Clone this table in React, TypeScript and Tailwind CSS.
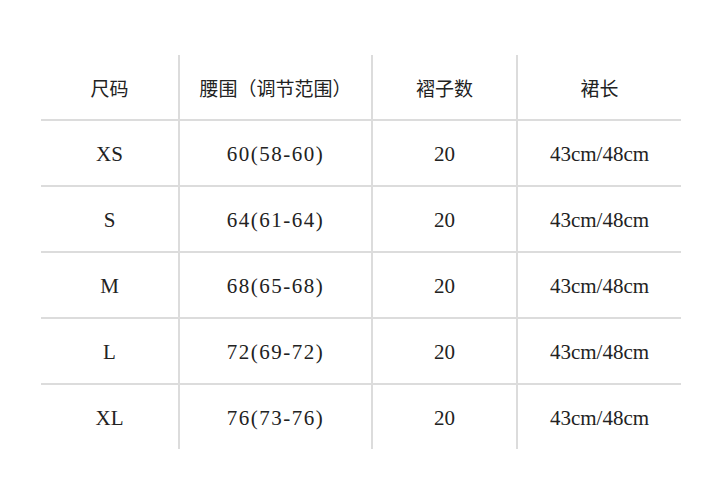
const headers = ["尺码", "腰围（调节范围）", "褶子数", "裙长"]

const rows = [
  ["XS", "60(58-60)", "20", "43cm/48cm"],
  ["S", "64(61-64)", "20", "43cm/48cm"],
  ["M", "68(65-68)", "20", "43cm/48cm"],
  ["L", "72(69-72)", "20", "43cm/48cm"],
  ["XL", "76(73-76)", "20", "43cm/48cm"],
]

const cjk = { fontFamily: '"Noto Sans CJK SC", "Noto Sans", sans-serif' }
const serif = { fontFamily: '"Liberation Serif", "Noto Sans CJK SC", serif' }

export default function App() {
  return (
    <div className="h-[486px] w-[720px] bg-white pl-[41px] pt-[55px] text-[#222222]">
      <div className="grid w-[640px] grid-cols-[137px_193px_145px_165px]">
        {headers.map((h, i) => (
          <div
            key={h}
            className={`flex h-[64px] items-center justify-center pt-[2px] text-[19px] ${i > 0 ? "border-l-2 border-[#dcdcdc]" : ""}`}
            style={cjk}
          >
            {h}
          </div>
        ))}
        {rows.map((row) =>
          row.map((cell, i) => (
            <div
              key={row[0] + i}
              className={`flex h-[66px] items-center justify-center border-t-2 border-[#dcdcdc] pt-[4px] text-[21px] ${i > 0 ? "border-l-2" : ""} ${i === 1 ? "tracking-[1.5px]" : ""}`}
              style={serif}
            >
              {cell}
            </div>
          ))
        )}
      </div>
    </div>
  )
}
